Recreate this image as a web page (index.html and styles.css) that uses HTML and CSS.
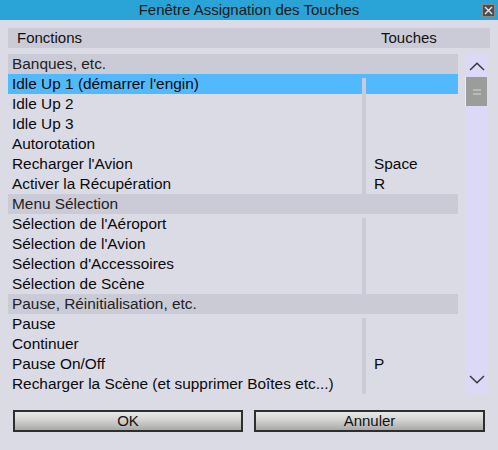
FILE: index.html
```html
<!DOCTYPE html>
<html lang="fr">
<head>
<meta charset="utf-8">
<title>Fenêtre Assignation des Touches</title>
<link rel="stylesheet" href="styles.css">
</head>
<body>
<div class="window">
  <div class="titlebar">
    <span class="title">Fenêtre Assignation des Touches</span>
    <span class="close">
      <svg width="13" height="13" viewBox="0 0 13 13"><rect x="0.5" y="0.5" width="12" height="12" fill="#4d4d4d" stroke="#8a8a8a"/><path d="M3 3 L10 10 M10 3 L3 10" stroke="#e8e8e8" stroke-width="1.4"/></svg>
    </span>
  </div>
  <div class="content">
    <div class="colhead">
      <span class="h-func">Fonctions</span>
      <span class="h-keys">Touches</span>
    </div>
    <div class="listwrap">
      <div class="list">
        <div class="section">Banques, etc.</div>
        <div class="group">
          <div class="row selected"><span class="f">Idle Up 1 (démarrer l'engin)</span><span class="mid"></span><span class="k"></span></div>
          <div class="row"><span class="f">Idle Up 2</span><span class="mid"></span><span class="k"></span></div>
          <div class="row"><span class="f">Idle Up 3</span><span class="mid"></span><span class="k"></span></div>
          <div class="row"><span class="f">Autorotation</span><span class="mid"></span><span class="k"></span></div>
          <div class="row"><span class="f">Recharger l'Avion</span><span class="mid"></span><span class="k">Space</span></div>
          <div class="row"><span class="f">Activer la Récupération</span><span class="mid"></span><span class="k">R</span></div>
        </div>
        <div class="section">Menu Sélection</div>
        <div class="group">
          <div class="row"><span class="f">Sélection de l'Aéroport</span><span class="mid"></span><span class="k"></span></div>
          <div class="row"><span class="f">Sélection de l'Avion</span><span class="mid"></span><span class="k"></span></div>
          <div class="row"><span class="f">Sélection d'Accessoires</span><span class="mid"></span><span class="k"></span></div>
          <div class="row"><span class="f">Sélection de Scène</span><span class="mid"></span><span class="k"></span></div>
        </div>
        <div class="section">Pause, Réinitialisation, etc.</div>
        <div class="group">
          <div class="row"><span class="f">Pause</span><span class="mid"></span><span class="k"></span></div>
          <div class="row"><span class="f">Continuer</span><span class="mid"></span><span class="k"></span></div>
          <div class="row"><span class="f">Pause On/Off</span><span class="mid"></span><span class="k">P</span></div>
          <div class="row"><span class="f">Recharger la Scène (et supprimer Boîtes etc...)</span><span class="mid"></span><span class="k"></span></div>
        </div>
      </div>
      <div class="scrollbar">
        <svg class="arrow up" width="16" height="9" viewBox="0 0 16 9"><path d="M1 8 L8 1.2 L15 8" fill="none" stroke="#333" stroke-width="1.4"/></svg>
        <div class="thumb"><span class="grip"></span><span class="grip"></span></div>
        <div class="track"></div>
        <svg class="arrow down" width="16" height="9" viewBox="0 0 16 9"><path d="M1 1 L8 7.8 L15 1" fill="none" stroke="#333" stroke-width="1.4"/></svg>
      </div>
    </div>
    <div class="buttons">
      <button class="btn ok">OK</button>
      <button class="btn cancel">Annuler</button>
    </div>
  </div>
</div>
</body>
</html>
```

FILE: styles.css
```css
html, body {
  margin: 0;
  padding: 0;
  background: #dbdbe6;
}
body {
  font-family: "Liberation Sans", Arial, sans-serif;
  font-size: 15px;
  color: #111;
  width: 498px;
  height: 450px;
  overflow: hidden;
}
.window {
  display: flex;
  flex-direction: column;
}
.titlebar {
  height: 20px;
  background: #2aa3d7;
  display: flex;
  align-items: center;
  justify-content: center;
  position: relative;
}
.title {
  font-size: 15px;
  line-height: 20px;
  color: #1a1a1a;
}
.close {
  position: absolute;
  right: 3px;
  top: 4px;
  width: 13px;
  height: 13px;
  display: block;
}
.close svg { display: block; }
.content {
  padding: 8px 8px 0 8px;
  display: flex;
  flex-direction: column;
}
.colhead {
  height: 20px;
  background: #cbcbd7;
  display: flex;
  align-items: center;
  line-height: 20px;
  color: #111;
}
.h-func {
  padding-left: 9px;
  width: 364px;
}
.listwrap {
  margin-top: 6px;
  display: flex;
  gap: 7px;
  height: 340px;
}
.list {
  width: 450px;
  display: flex;
  flex-direction: column;
  font-size: 15.4px;
}
.section {
  height: 20px;
  line-height: 20px;
  background: #cbcbd7;
  padding-left: 4px;
  color: #222;
}
.group {
  display: flex;
  flex-direction: column;
}
.row {
  height: 20px;
  line-height: 20px;
  display: grid;
  grid-template-columns: 354px 4px 92px;
}
.row.selected {
  background: #52bafc;
}
.f {
  padding-left: 4px;
  white-space: nowrap;
  color: #0a0a0a;
  overflow: visible;
  position: relative;
  z-index: 1;
}
.mid {
  background: #cbcbd7;
}
.row:first-child .mid {
  margin-top: 4px;
}
.k {
  padding-left: 8px;
  color: #0a0a0a;
}
.scrollbar {
  width: 23px;
  background: #dcd9f6;
  display: flex;
  flex-direction: column;
  align-items: center;
}
.arrow {
  display: block;
}
.arrow.up {
  margin-top: 8px;
  margin-bottom: 6px;
}
.arrow.down {
  margin-bottom: 10px;
}
.thumb {
  align-self: flex-end;
  width: 21px;
  height: 29px;
  margin-right: 1px;
  background: #9b9d9a;
  border-left: 1px solid #eeeef6;
  display: flex;
  flex-direction: column;
  align-items: center;
  justify-content: center;
  gap: 2px;
}
.grip {
  display: block;
  width: 8px;
  height: 2px;
  background: #b9bab8;
}
.track {
  flex: 1;
}
.buttons {
  margin-top: 16px;
  padding-left: 5px;
  display: flex;
  gap: 11px;
}
.btn {
  font-family: "Liberation Sans", Arial, sans-serif;
  font-size: 15px;
  color: #111;
  height: 22px;
  padding: 0;
  border: 2px solid #2e2e2e;
  background: linear-gradient(#e9eae7, #d2d3d0 45%, #a9aaa8);
  line-height: 18px;
}
.btn.ok {
  width: 230px;
}
.btn.cancel {
  width: 231px;
}
```
